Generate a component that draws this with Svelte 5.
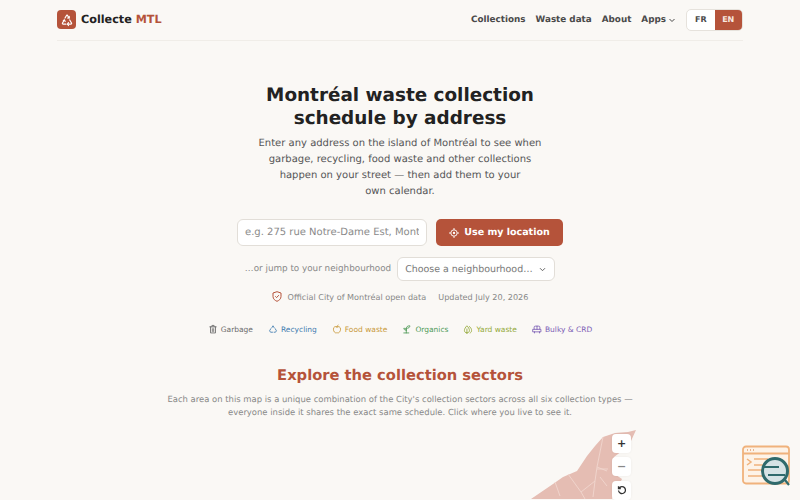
<script>
  const types = [
    { label: 'Garbage', color: '#6b6b6b', icon: 'M2.500 4h9M5.500 4V2h3v2M3.500 4v8.500h7V4M6 6.500v4M8 6.500v4' },
    { label: 'Recycling', color: '#3f7cb0', icon: 'M5.500 5 7 2.500 8.500 5M10 6.500l1.800 3-1.300 2H8.500M4 6.500l-1.800 3 1.300 2h2.800' },
    { label: 'Food waste', color: '#c99a3c', icon: 'M7 4c-2-1.200-5-.3-5 3.200s2.200 5.300 3.500 5.300c.7 0 1-.3 1.500-.3s.8.3 1.500.3c1.300 0 3.500-2 3.500-5.300S9 2.800 7 4ZM7 4c0-1 .5-2 1.500-2.500' },
    { label: 'Organics', color: '#4f9a58', icon: 'M6 12.500V7M2.500 12.500h7M6 8.500C6 6.800 4.800 6 2.500 6c0 1.800 1.200 2.500 3.500 2.500ZM6 6c0-2 1.500-3.500 5-3.500 0 2.500-1.500 3.500-5 3.500Z' },
    { label: 'Yard waste', color: '#94aa3a', icon: 'M5.500 12.500c-2.200 0-3.500-1.500-3.500-3.500s1.500-4.500 3.500-6.500c2 2 3.500 4.500 3.500 6.500s-1.300 3.500-3.500 3.500ZM5.500 12.500V7M9 3.500c1.800 1.200 3 3.500 3 5.500s-.8 3-2 3.500' },
    { label: 'Bulky & CRD', color: '#7d60b5', icon: 'M3 7V4.500c0-1 .5-1.500 1.500-1.500h5c1 0 1.500.5 1.500 1.500V7M1.500 7.500h11V11h-11ZM3.500 11v1.500M10.500 11v1.500M7 3v4.500' }
  ]
  const links = ['Collections', 'Waste data', 'About']
</script>

<div class="page">
  <header class="topbar">
    <a class="brand" href="#top">
      <span class="logo">
        <svg width="14" height="14" viewBox="0 0 14 14" fill="none" stroke="#fff" stroke-width="1.200" stroke-linecap="round" stroke-linejoin="round">
          <path d="M5 5 6.700 2.200c.2-.3.500-.3.700 0L9 5M9.700 7l1.800 3c.3.600 0 1.200-.7 1.200H8M6 11.200H3.200c-.7 0-1-.6-.7-1.200L4.300 7" />
          <path d="M7.500 5H9.200V3.300M8.500 9.700 7.500 11.200l1 1.300M3.300 7.700 4.300 7l.9 1.300" />
        </svg>
      </span>
      <span class="name">Collecte <em>MTL</em></span>
    </a>
    <nav class="nav">
      {#each links as link}
        <a href="#top">{link}</a>
      {/each}
      <a href="#top" class="apps">
        Apps
        <svg width="8" height="8" viewBox="0 0 8 8" fill="none" stroke="currentColor" stroke-width="1"><path d="M1.500 3 4 5.500 6.500 3" /></svg>
      </a>
      <div class="lang">
        <button type="button">FR</button>
        <button type="button" class="on">EN</button>
      </div>
    </nav>
  </header>

  <main>
    <section class="hero">
      <h1>Montréal waste collection schedule by address</h1>
      <p class="lead">Enter any address on the island of Montréal to see when garbage, recycling, food waste and other collections happen on your street — then add them to your own calendar.</p>

      <div class="search">
        <input type="text" placeholder="e.g. 275 rue Notre-Dame Est, Montréal" />
        <button type="button" class="locate">
          <svg width="10" height="10" viewBox="0 0 12 12" fill="none" stroke="#fff" stroke-width="1.100">
            <circle cx="6" cy="6" r="3.800" />
            <circle cx="6" cy="6" r="1.400" fill="#fff" stroke="none" />
            <path d="M6 0v2.200M6 9.800V12M0 6h2.200M9.800 6H12" />
          </svg>
          Use my location
        </button>
      </div>

      <div class="jump">
        <span>…or jump to your neighbourhood</span>
        <div class="select">
          <span>Choose a neighbourhood…</span>
          <svg width="9" height="9" viewBox="0 0 9 9" fill="none" stroke="#666" stroke-width="1"><path d="M2 3.200 4.500 5.700 7 3.200" /></svg>
        </div>
      </div>

      <div class="meta">
        <svg width="10" height="11" viewBox="0 0 10 11" fill="none" stroke="#b5533a" stroke-width="1">
          <path d="M5 .7 9 2v3.500c0 2.500-2 4-4 4.800-2-.8-4-2.300-4-4.800V2Z" />
          <path d="M3.300 5.300 4.600 6.600 6.800 4.200" />
        </svg>
        <span class="official">Official City of Montréal open data</span>
        <span>Updated July 20, 2026</span>
      </div>

      <ul class="types">
        {#each types as t}
          <li style="color: {t.color}">
            <svg width="10" height="10" viewBox="0 0 14 14" fill="none" stroke="currentColor" stroke-width="1.200" stroke-linecap="round" stroke-linejoin="round"><path d={t.icon} /></svg>
            {t.label}
          </li>
        {/each}
      </ul>
    </section>

    <section class="explore">
      <h2>Explore the collection sectors</h2>
      <p>Each area on this map is a unique combination of the City's collection sectors across all six collection types — everyone inside it shares the exact same schedule. Click where you live to see it.</p>
      <div class="map">
        <svg width="686" height="70" viewBox="57 430 686 70">
          <path d="M531 500 L553 485 L563 478 L577 472 L587 457 L595 447 L603 438 L615 434 L628 433 L636 431 L631 442 L622 452 L614 458 L616 476 L622 480 L612 500Z" fill="#e5bdb3" />
          <g fill="none" stroke="#f0d6ce" stroke-width="0.900">
            <path d="M603 438 L597 468 L595 482 L593 498" />
            <path d="M597 468 L607 472" />
            <path d="M600 478 L607 487" />
            <path d="M595 482 L581 493 L568 475" />
            <path d="M581 493 L585 500" />
            <path d="M555 483 L560 497" />
            <path d="M597 470 L608 470" />
          </g>
        </svg>
        <div class="zoom">
          <button type="button">+</button>
          <button type="button" class="minus">−</button>
          <button type="button" class="reset">
            <svg width="10" height="10" viewBox="0 0 10 10" fill="none" stroke="#333" stroke-width="1.300"><path d="M2 3.200A3.500 3.500 0 1 1 1.500 5.500M1.500 1.200v2.300h2.300" /></svg>
          </button>
        </div>
      </div>
    </section>
  </main>

  <aside class="badge">
    <svg width="50" height="44" viewBox="0 0 50 44" fill="none">
      <rect x="1" y="1.500" width="46" height="37" rx="3" fill="#fdf3e8" stroke="#f0b27c" stroke-width="1.800" />
      <path d="M1 8.500h46" stroke="#f0b27c" stroke-width="1.800" />
      <path d="M5 5h1M8 5h1M11 5h1" stroke="#e5a070" stroke-width="1.300" />
      <path d="M5 14l4 3-4 3M12 14h14M12 20h10M6 25h20M6 31h20" stroke="#f0b27c" stroke-width="1.500" />
      <circle cx="33" cy="26" r="12.500" fill="#d6e3e5" stroke="#2f6a6c" stroke-width="3" />
      <path d="M22 22h15M26 30h17M43 35l4 5" stroke="#2f6a6c" stroke-width="2.200" />
    </svg>
  </aside>
</div>

<style>
  :global(body) {
    background: #faf8f5;
  }

  .page {
    width: 800px;
    height: 500px;
    position: relative;
    overflow: hidden;
    font-family: "DejaVu Sans", sans-serif;
    color: #222;
    text-rendering: geometricPrecision;
  }

  .topbar {
    width: 686px;
    height: 41px;
    margin: 0 auto;
    padding-bottom: 1px;
    box-sizing: border-box;
    display: flex;
    align-items: center;
    justify-content: space-between;
    border-bottom: 1px solid #f0ede8;
  }

  .brand {
    display: flex;
    align-items: center;
    gap: 5px;
    text-decoration: none;
    color: #222;
  }

  .logo {
    width: 19px;
    height: 19px;
    border-radius: 4px;
    background: #b5533a;
    display: flex;
    align-items: center;
    justify-content: center;
  }

  .name {
    font-size: 11.200px;
    font-weight: 700;
  }

  .name em {
    font-style: normal;
    color: #b5533a;
  }

  .nav {
    display: flex;
    align-items: center;
    gap: 10px;
  }

  .nav a {
    font-size: 8.800px;
    font-weight: 700;
    color: #4a4a4a;
    text-decoration: none;
  }

  .apps {
    display: flex;
    align-items: center;
    gap: 2px;
  }

  .lang {
    display: flex;
    height: 22px;
    box-sizing: border-box;
    border: 1px solid #e6e2dc;
    border-radius: 5px;
    overflow: hidden;
    background: #fff;
  }

  .lang button {
    width: 27.500px;
    border: 0;
    padding: 0;
    background: none;
    font: 700 8px "DejaVu Sans", sans-serif;
    color: #4a4a4a;
    text-rendering: geometricPrecision;
  }

  .lang .on {
    background: #b5533a;
    color: #f8e8e0;
  }

  .hero {
    display: flex;
    flex-direction: column;
    align-items: center;
  }

  h1 {
    width: 300px;
    margin: 43px 0 0;
    font-size: 18.400px;
    line-height: 23px;
    text-align: center;
    color: #222;
  }

  .lead {
    width: 290px;
    margin: 6px 0 0;
    font-size: 10px;
    line-height: 16px;
    text-align: center;
    text-wrap: pretty;
    color: #555;
  }

  .search {
    display: flex;
    gap: 9px;
    margin-top: 19px;
  }

  .search input {
    width: 190px;
    height: 27px;
    box-sizing: border-box;
    padding: 0 7px;
    border: 1px solid #e2ded8;
    border-radius: 6px;
    background: #fff;
    font: 10px "DejaVu Sans", sans-serif;
    text-rendering: geometricPrecision;
    outline: none;
  }

  .search input::placeholder {
    color: #8a8a8a;
  }

  .locate {
    width: 127px;
    height: 27px;
    border: 0;
    border-radius: 5px;
    background: #b5533a;
    color: #fff;
    font: 700 9.500px "DejaVu Sans", sans-serif;
    text-rendering: geometricPrecision;
    display: flex;
    align-items: center;
    justify-content: center;
    gap: 5px;
  }

  .jump {
    display: flex;
    align-items: center;
    gap: 6px;
    margin-top: 11px;
    font-size: 8.800px;
    color: #888;
  }

  .select {
    width: 158px;
    height: 24px;
    box-sizing: border-box;
    padding: 0 7px;
    border: 1px solid #e2ded8;
    border-radius: 6px;
    background: #fff;
    display: flex;
    align-items: center;
    justify-content: space-between;
    font-size: 9.450px;
    color: #777;
    white-space: nowrap;
  }

  .meta {
    display: flex;
    align-items: center;
    margin-top: 10px;
    font-size: 8.100px;
    color: #888;
  }

  .official {
    margin: 0 12px 0 6px;
  }

  .types {
    list-style: none;
    display: flex;
    gap: 15px;
    margin: 22px 0 0;
    padding: 0;
    font-size: 7.500px;
  }

  .types li {
    display: flex;
    align-items: center;
    gap: 3px;
  }

  .explore {
    text-align: center;
    margin-top: 32px;
  }

  h2 {
    margin: 0;
    font-size: 14.700px;
    line-height: 20px;
    color: #b5533a;
  }

  .explore p {
    width: 480px;
    margin: 7px auto 0;
    font-size: 8.450px;
    line-height: 13px;
    color: #888;
  }

  .map {
    width: 686px;
    height: 70px;
    margin: 10px auto 0;
    position: relative;
  }

  .zoom {
    position: absolute;
    left: 555px;
    top: 4.500px;
    display: flex;
    flex-direction: column;
    gap: 4.500px;
  }

  .zoom button {
    width: 19px;
    height: 19px;
    padding: 0;
    border: 0;
    border-radius: 4px;
    background: #fff;
    box-shadow: 0 0 3px rgba(0, 0, 0, 0.06);
    font: 700 11px "DejaVu Sans", sans-serif;
    color: #333;
    display: flex;
    align-items: center;
    justify-content: center;
  }

  .zoom .minus {
    color: #888;
  }

  .badge {
    position: absolute;
    left: 742px;
    top: 445px;
  }
</style>
